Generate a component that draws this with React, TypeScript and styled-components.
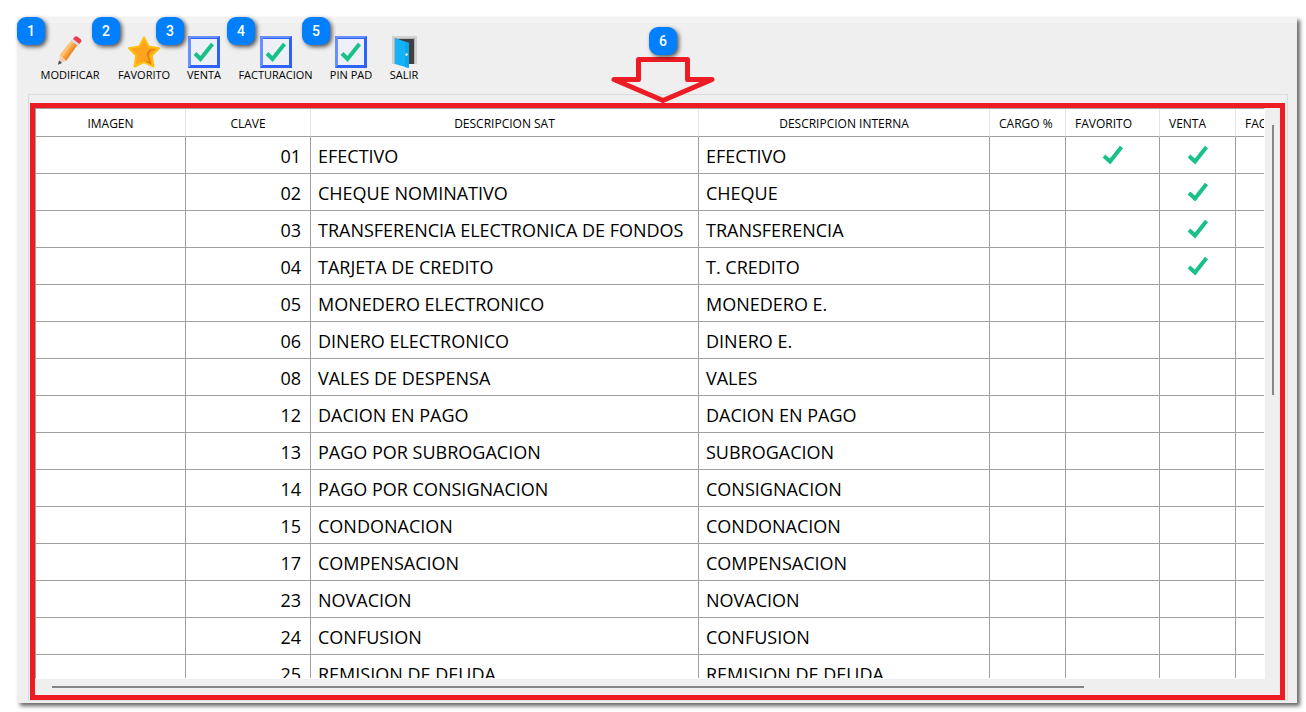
import React from "react";
import styled, { createGlobalStyle } from "styled-components";

const RED = "#ed1c24";
const LINE = "#a0a0a0";

const GlobalStyle = createGlobalStyle`
  * { box-sizing: border-box; }
  body {
    margin: 0;
    background: #fff;
    color: #000;
    font-family: "Open Sans", "Noto Sans", sans-serif;
  }
`;

const Page = styled.main`
  display: flex;
  height: 100vh;
  padding: 17px 9px 9px 17px;
`;

const Window = styled.section`
  position: relative;
  display: flex;
  flex: 1;
  flex-direction: column;
  min-width: 0;
  padding: 0 9px 2px 11px;
  border-top: 6px solid #f3f3f3;
  background: #efefef;
  box-shadow: 3px 3px 4px rgba(0, 0, 0, 0.6);
`;

const Toolbar = styled.nav`
  display: flex;
  gap: 19px;
  padding: 13px 12px 12px;
`;

const ToolButton = styled.button<{ $width: number }>`
  position: relative;
  display: flex;
  flex: 0 0 auto;
  flex-direction: column;
  align-items: center;
  width: ${(p) => p.$width}px;
  padding: 0;
  border: 0;
  background: none;
  color: #000;
  font: 11px/14px "Open Sans", "Noto Sans", sans-serif;
  white-space: nowrap;
`;

const Badge = styled.span<{ $left: number; $top: number }>`
  position: absolute;
  z-index: 2;
  top: ${(p) => p.$top}px;
  left: ${(p) => p.$left}px;
  width: 28px;
  height: 28px;
  border-radius: 9px;
  background: #007fff;
  box-shadow: 2px 2px 4px rgba(0, 0, 0, 0.65);
  color: #fff;
  font: 500 14px/28px Roboto, sans-serif;
  text-align: center;
`;

const Arrow = styled.svg`
  position: absolute;
  z-index: 1;
  top: 33px;
  left: 593px;
`;

const GroupBox = styled.div`
  display: flex;
  flex: 1;
  min-height: 0;
  padding: 8px 2px 0 1px;
  border: 1px solid #dcdcdc;
`;

const Frame = styled.div`
  display: grid;
  flex: 1;
  grid-template-columns: minmax(0, 1fr) 15px;
  grid-template-rows: minmax(0, 1fr) 16px;
  min-width: 0;
  border: 5px solid ${RED};
`;

const Viewport = styled.div`
  overflow: hidden;
  border: 1px solid #fff;
  border-top-color: ${LINE};
  border-left-color: ${LINE};
  background: #fff;
`;

const VerticalTrack = styled.div`
  display: flex;
  justify-content: center;
  padding: 17px 0 15px;
`;

const HorizontalTrack = styled.div`
  display: flex;
  align-items: center;
  padding: 0 13px 0 17px;
`;

const Thumb = styled.div<{ $vertical?: boolean }>`
  width: ${(p) => (p.$vertical ? "2px" : "86%")};
  height: ${(p) => (p.$vertical ? "50%" : "2px")};
  background: #858585;
`;

const Table = styled.table`
  width: 100%;
  min-width: 1320px;
  border-spacing: 0;
  table-layout: fixed;
`;

const HeaderCell = styled.th<{ $left?: boolean }>`
  height: 28px;
  padding: 2px 9px 0;
  border-right: 1px solid #e5e5e5;
  border-bottom: 1px solid ${LINE};
  font-size: 12px;
  font-weight: 400;
  line-height: 16px;
  text-align: ${(p) => (p.$left ? "left" : "center")};
  white-space: nowrap;
`;

const Cell = styled.td<{ $align?: "right" | "center" }>`
  height: 37px;
  padding: 2px 9px 0 7px;
  border-right: 1px solid ${LINE};
  border-bottom: 1px solid ${LINE};
  font-size: 18px;
  line-height: 24px;
  text-align: ${(p) => p.$align ?? "left"};
  white-space: nowrap;
`;

const CheckCell = styled(Cell)`
  padding: 0 7px;

  svg { display: block; margin: 0 auto; }
`;

const PencilIcon = () => (
  <svg width="32" height="32" viewBox="0 0 32 32" aria-hidden="true">
    <path d="M6 19 18 4l6 4-12 17z" fill="#f9a540" />
    <path d="M6 19 18 4l2 1.500L8.500 21z" fill="#ffc274" />
    <path d="M10.500 23 22 6.500l2 1.500-12 17z" fill="#f08b2c" />
    <path d="m6 19 6 6-7.500 3z" fill="#f2cfae" />
    <path d="m5 24.500 3 2.500-4 1.700z" fill="#3f4a55" />
    <path d="m17 5 2-2.500 7 5-2 2.500z" fill="#d5dde3" />
    <path d="m19 3 1.500-2c1-1 2-1 3-.3l3 2.300c1 1 1.200 2 .5 3l-1.500 2z" fill="#ee3e4a" />
  </svg>
);

const StarIcon = () => (
  <svg width="32" height="32" viewBox="0 0 32 32" aria-hidden="true">
    <path
      d="m16 1.500 4.700 9 10.300 1.700-7.200 7.300 1.700 11L16 26l-9.500 4.500 1.700-11L1 12.200l10.300-1.700z"
      fill="#ffa41c"
      stroke="#ffbf10"
      strokeWidth="2"
      strokeLinejoin="round"
    />
    <path d="m29 13.500-6.500 1.500-2 4 3 10-7.500-4.500 5 1-2.500-8 3-4z" fill="#e07a12" />
  </svg>
);

const TickBoxIcon = () => (
  <svg width="32" height="32" viewBox="0 0 32 32" aria-hidden="true">
    <path d="M0 0h32v32H0z" fill="#2f62fa" />
    <path d="M0 0h32l-3 2H3v27l-3 3z" fill="#6a8fff" />
    <path d="M3 3h26v26H3z" fill="#edf0f6" />
    <path d="m7 17.500 5.500 5.500L24.500 8" fill="none" stroke="#17c187" strokeWidth="4" />
  </svg>
);

const DoorIcon = () => (
  <svg width="32" height="32" viewBox="0 0 32 32" aria-hidden="true">
    <path d="M4 0h25v28H4z" fill="#d2d2d2" />
    <path d="M6 2h21v26H6z" fill="#b4b4b4" />
    <path d="M8 3h18v25H8z" fill="#404040" />
    <path d="m7 2 14 5v25L7 28z" fill="#12b4f7" />
    <path d="m17 5.500 4 1.500v25l-4-1z" fill="#0fa6ee" />
    <circle cx="18.500" cy="18.500" r="1.200" fill="#fff" />
  </svg>
);

const Check = () => (
  <svg width="22" height="22" viewBox="0 0 22 22" role="img" aria-label="Sí">
    <path d="m2 12 6 5.500L19.500 3" fill="none" stroke="#17c187" strokeWidth="4" />
  </svg>
);

const tools = [
  { label: "MODIFICAR", width: 60, icon: <PencilIcon />, badge: 1, left: -23 },
  { label: "FAVORITO", width: 50, icon: <StarIcon />, badge: 2, left: -27 },
  { label: "VENTA", width: 32, icon: <TickBoxIcon />, badge: 3, left: -32 },
  { label: "FACTURACION", width: 73, icon: <TickBoxIcon />, badge: 4, left: -12 },
  { label: "PIN PAD", width: 40, icon: <TickBoxIcon />, badge: 5, left: -29 },
  { label: "SALIR", width: 28, icon: <DoorIcon /> },
];

const columns = [
  { label: "IMAGEN", width: 150 },
  { label: "CLAVE", width: 125 },
  { label: "DESCRIPCION SAT", width: 388 },
  { label: "DESCRIPCION INTERNA", width: 291 },
  { label: "CARGO %", width: 76, left: true },
  { label: "FAVORITO", width: 94, left: true },
  { label: "VENTA", width: 76, left: true },
  { label: "FACTURACION", left: true },
];

type Row = { key: string; sat: string; name: string; favorite?: boolean; sale?: boolean };

const rows: Row[] = [
  { key: "01", sat: "EFECTIVO", name: "EFECTIVO", favorite: true, sale: true },
  { key: "02", sat: "CHEQUE NOMINATIVO", name: "CHEQUE", sale: true },
  { key: "03", sat: "TRANSFERENCIA ELECTRONICA DE FONDOS", name: "TRANSFERENCIA", sale: true },
  { key: "04", sat: "TARJETA DE CREDITO", name: "T. CREDITO", sale: true },
  { key: "05", sat: "MONEDERO ELECTRONICO", name: "MONEDERO E." },
  { key: "06", sat: "DINERO ELECTRONICO", name: "DINERO E." },
  { key: "08", sat: "VALES DE DESPENSA", name: "VALES" },
  { key: "12", sat: "DACION EN PAGO", name: "DACION EN PAGO" },
  { key: "13", sat: "PAGO POR SUBROGACION", name: "SUBROGACION" },
  { key: "14", sat: "PAGO POR CONSIGNACION", name: "CONSIGNACION" },
  { key: "15", sat: "CONDONACION", name: "CONDONACION" },
  { key: "17", sat: "COMPENSACION", name: "COMPENSACION" },
  { key: "23", sat: "NOVACION", name: "NOVACION" },
  { key: "24", sat: "CONFUSION", name: "CONFUSION" },
  { key: "25", sat: "REMISION DE DEUDA", name: "REMISION DE DEUDA" },
];

export default function App() {
  return (
    <>
      <GlobalStyle />
      <Page>
        <Window>
          <Toolbar>
            {tools.map((t) => (
              <ToolButton key={t.label} type="button" $width={t.width}>
                {t.icon}
                {t.label}
                {t.badge && (
                  <Badge $left={t.left ?? 0} $top={-19}>
                    {t.badge}
                  </Badge>
                )}
              </ToolButton>
            ))}
          </Toolbar>
          <Badge $left={632} $top={4}>6</Badge>
          <Arrow width="106" height="48" viewBox="0 0 106 48" aria-hidden="true">
            <path
              d="M28.500 3.500h49v20h24.500L53 44.500 4 23.500h24.500z"
              fill="none"
              stroke={RED}
              strokeWidth="5"
              strokeLinejoin="round"
            />
          </Arrow>
          <GroupBox>
            <Frame>
              <Viewport>
                <Table>
                  <colgroup>
                    {columns.map((c) => (
                      <col key={c.label} width={c.width} />
                    ))}
                  </colgroup>
                  <thead>
                    <tr>
                      {columns.map((c) => (
                        <HeaderCell key={c.label} scope="col" $left={c.left}>
                          {c.label}
                        </HeaderCell>
                      ))}
                    </tr>
                  </thead>
                  <tbody>
                    {rows.map((r) => (
                      <tr key={r.key}>
                        <Cell />
                        <Cell $align="right">{r.key}</Cell>
                        <Cell>{r.sat}</Cell>
                        <Cell>{r.name}</Cell>
                        <Cell />
                        <CheckCell>{r.favorite && <Check />}</CheckCell>
                        <CheckCell>{r.sale && <Check />}</CheckCell>
                        <Cell />
                      </tr>
                    ))}
                  </tbody>
                </Table>
              </Viewport>
              <VerticalTrack>
                <Thumb $vertical />
              </VerticalTrack>
              <HorizontalTrack>
                <Thumb />
              </HorizontalTrack>
            </Frame>
          </GroupBox>
        </Window>
      </Page>
    </>
  );
}
